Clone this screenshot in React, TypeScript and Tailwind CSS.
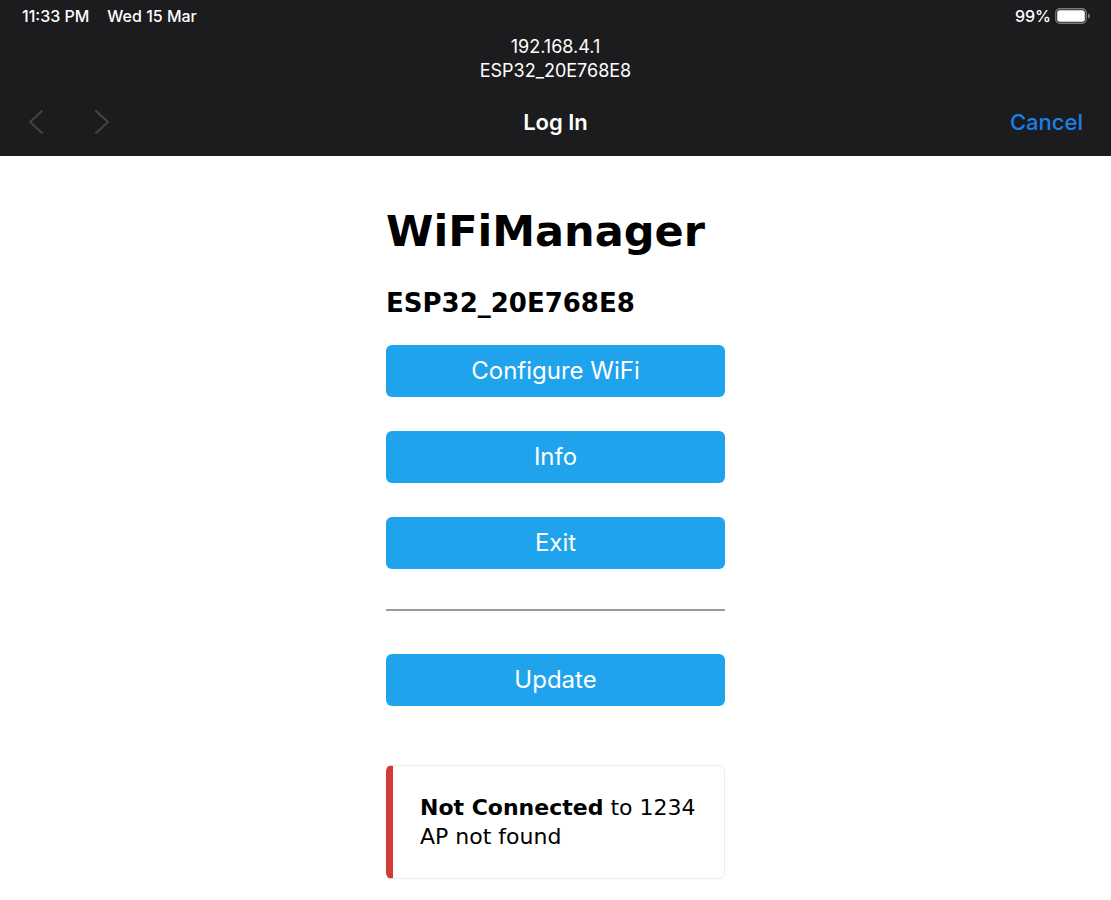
import React from "react";

const portalActions = ["Configure WiFi", "Info", "Exit"];

function Chevron({ d }: { d: string }) {
  return (
    <svg width="16" height="26" viewBox="0 0 16 26" fill="none" stroke="#444446" strokeWidth="2" strokeLinecap="round" strokeLinejoin="miter" aria-hidden="true">
      <path d={d} />
    </svg>
  );
}

function ActionButton({ children }: { children: React.ReactNode }) {
  return (
    <button type="button" className="h-[52px] w-full rounded-md bg-[#1fa3ec] text-2xl text-white font-['Inter',sans-serif]">
      {children}
    </button>
  );
}

export default function App() {
  return (
    <div className="min-h-screen bg-white text-black">
      <header className="bg-[#1c1c1e] pb-3 font-['Inter',sans-serif] text-white">
        <div className="flex h-8 items-center justify-between pr-5 pl-[22px] text-base font-medium">
          <div className="flex gap-[18px]">
            <span>11:33 PM</span>
            <span>Wed 15 Mar</span>
          </div>
          <div className="flex items-center gap-1">
            <span>99%</span>
            <svg width="36" height="16" viewBox="0 0 36 16" aria-hidden="true">
              <rect x="0.75" y="0.75" width="30.5" height="14.5" rx="4" fill="none" stroke="#79797b" strokeWidth="1.3" />
              <rect x="2.2" y="2.2" width="27.6" height="11.6" rx="2.5" fill="#fff" />
              <path d="M33 5.5v5c1.3-.4 2-1.4 2-2.5s-.7-2.1-2-2.5z" fill="#79797b" />
            </svg>
          </div>
        </div>
        <div className="pt-[3px] text-center text-lg leading-6">
          <p>192.168.4.1</p>
          <p>ESP32_20E768E8</p>
        </div>
        <nav className="mt-[17px] grid h-11 grid-cols-3 items-center px-7">
          <div className="flex gap-[50px]">
            <button type="button" aria-label="Back"><Chevron d="M14 2 2 13l12 11" /></button>
            <button type="button" aria-label="Forward"><Chevron d="m2 2 12 11L2 24" /></button>
          </div>
          <h2 className="text-center text-[22px] font-semibold">Log In</h2>
          <button type="button" className="justify-self-end text-[22px] font-medium text-[#1a80e8]">Cancel</button>
        </nav>
      </header>
      <main className="mx-auto w-full max-w-[339px] pt-[47px] font-['DejaVu_Sans','Verdana',sans-serif]">
        <h1 className="text-[43px] leading-[56px] font-bold">WiFiManager</h1>
        <h3 className="mt-7 text-[26px] leading-8 font-bold">ESP32_20E768E8</h3>
        <div className="mt-[26px] flex flex-col gap-[34px]">
          {portalActions.map((label) => (
            <ActionButton key={label}>{label}</ActionButton>
          ))}
        </div>
        <hr className="mt-10 mb-[43px] border-t-2 border-[#9a9a9a]" />
        <ActionButton>Update</ActionButton>
        <div className="mt-[59px] rounded-md border border-l-[7px] border-[#eee] border-l-[#d33a35] py-[27px] pl-[27px] text-[22px] leading-[29px]">
          <p><strong>Not Connected</strong> to 1234</p>
          <p>AP not found</p>
        </div>
      </main>
    </div>
  );
}
